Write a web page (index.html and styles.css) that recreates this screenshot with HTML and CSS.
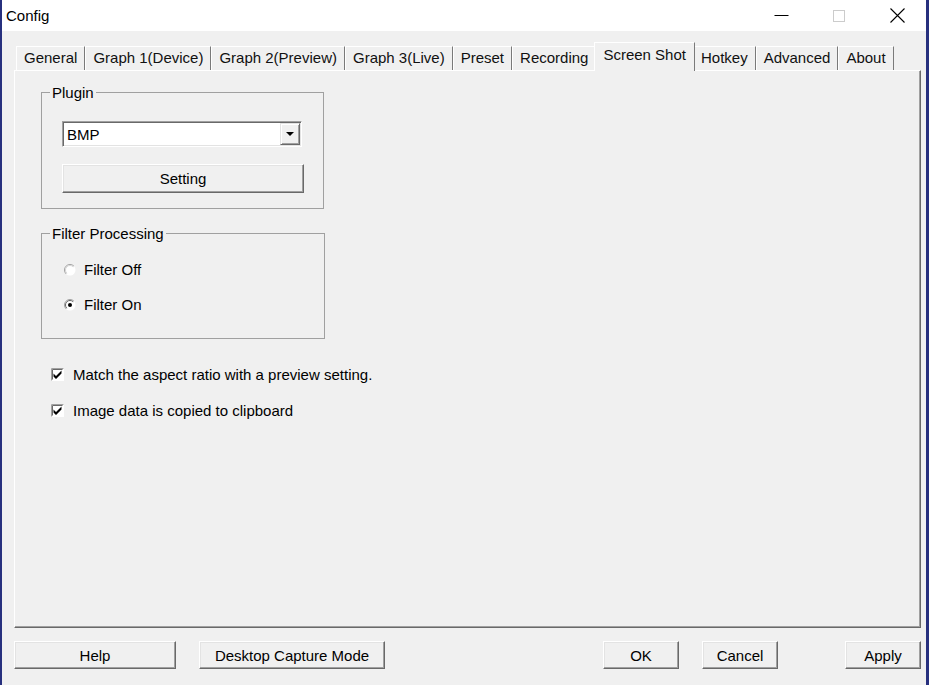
FILE: index.html
```html
<!DOCTYPE html>
<html lang="en">
<head>
<meta charset="utf-8">
<title>Config</title>
<link rel="stylesheet" href="styles.css">
</head>
<body>
<div class="window">
  <header class="titlebar">
    <span class="title">Config</span>
    <div class="caption-buttons">
      <span class="cap-btn"><svg width="15" height="15" viewBox="0 0 15 15"><path d="M0.5 7.5H14.5" stroke="#000" stroke-width="1"/></svg></span>
      <span class="cap-btn"><svg width="12" height="12" viewBox="0 0 12 12"><rect x="0.5" y="0.5" width="11" height="11" fill="none" stroke="#cccccc"/></svg></span>
      <span class="cap-btn"><svg width="15" height="15" viewBox="0 0 15 15"><path d="M0.5 0.5L14.5 14.5M14.5 0.5L0.5 14.5" stroke="#000" stroke-width="1.1"/></svg></span>
    </div>
  </header>
  <main class="dialog">
    <nav class="tabs">
      <span class="tab">General</span>
      <span class="tab">Graph 1(Device)</span>
      <span class="tab">Graph 2(Preview)</span>
      <span class="tab">Graph 3(Live)</span>
      <span class="tab">Preset</span>
      <span class="tab">Recording</span>
      <span class="tab selected">Screen Shot</span>
      <span class="tab">Hotkey</span>
      <span class="tab">Advanced</span>
      <span class="tab">About</span>
    </nav>
    <section class="panel">
      <fieldset class="group plugin">
        <legend>Plugin</legend>
        <div class="group-body plugin-body">
          <div class="combo">
            <span class="combo-text">BMP</span>
            <span class="combo-btn"><svg width="8" height="4" viewBox="0 0 8 4"><path d="M0 0H8L4 4Z" fill="#000"/></svg></span>
          </div>
          <button class="btn setting" type="button">Setting</button>
        </div>
      </fieldset>
      <fieldset class="group filter">
        <legend>Filter Processing</legend>
        <div class="group-body filter-body">
          <label class="option">
            <svg class="radio" width="12" height="12" viewBox="0 0 12 12"><circle cx="6" cy="6" r="5.5" fill="#fff"/><path d="M2.1 9.9A5.5 5.5 0 0 1 9.9 2.1" fill="none" stroke="#a0a0a0"/><path d="M2.8 9.2A4.5 4.5 0 0 1 9.2 2.8" fill="none" stroke="#d4d4d4"/></svg>
            <span>Filter Off</span>
          </label>
          <label class="option">
            <svg class="radio" width="12" height="12" viewBox="0 0 12 12"><circle cx="6" cy="6" r="5.5" fill="#fff"/><path d="M2.1 9.9A5.5 5.5 0 0 1 9.9 2.1" fill="none" stroke="#a0a0a0"/><path d="M2.8 9.2A4.5 4.5 0 0 1 9.2 2.8" fill="none" stroke="#696969"/><circle cx="6" cy="6" r="2" fill="#000"/></svg>
            <span>Filter On</span>
          </label>
        </div>
      </fieldset>
      <div class="checks">
        <label class="check">
          <svg width="13" height="13" viewBox="0 0 13 13"><rect width="13" height="13" fill="#fff"/><path d="M0.5 12.5V0.5H12.5" fill="none" stroke="#a0a0a0"/><path d="M1.5 11.5V1.5H11.5" fill="none" stroke="#696969"/><path d="M2.5 5.5L5 8L10.5 2.5V5.5L5 11L2.5 8.5Z" fill="#000"/></svg>
          <span>Match the aspect ratio with a preview setting.</span>
        </label>
        <label class="check">
          <svg width="13" height="13" viewBox="0 0 13 13"><rect width="13" height="13" fill="#fff"/><path d="M0.5 12.5V0.5H12.5" fill="none" stroke="#a0a0a0"/><path d="M1.5 11.5V1.5H11.5" fill="none" stroke="#696969"/><path d="M2.5 5.5L5 8L10.5 2.5V5.5L5 11L2.5 8.5Z" fill="#000"/></svg>
          <span>Image data is copied to clipboard</span>
        </label>
      </div>
    </section>
    <footer class="footer">
      <button class="btn help" type="button">Help</button>
      <button class="btn capture" type="button">Desktop Capture Mode</button>
      <button class="btn ok" type="button">OK</button>
      <button class="btn cancel" type="button">Cancel</button>
      <button class="btn apply" type="button">Apply</button>
    </footer>
  </main>
</div>
</body>
</html>
```
FILE: styles.css
```css
html, body {
  margin: 0;
  height: 100%;
}
body {
  font: 15px "Liberation Sans", Arial, sans-serif;
  color: #000;
  background: #f0f0f0;
}
.window {
  height: 685px;
  box-sizing: border-box;
  display: flex;
  flex-direction: column;
  border-left: 2px solid #27307e;
  border-right: 3px solid #27307e;
  overflow: hidden;
}
.titlebar {
  flex: none;
  height: 31px;
  background: #fff;
  display: flex;
  align-items: center;
}
.title {
  padding-left: 4px;
}
.caption-buttons {
  margin-left: auto;
  display: flex;
  height: 100%;
}
.cap-btn {
  width: 58px;
  display: flex;
  align-items: center;
  justify-content: center;
}
.dialog {
  flex: 1;
  min-height: 0;
  display: flex;
  flex-direction: column;
  padding: 11px 5px 16px 12px;
}
.tabs {
  flex: none;
  height: 28px;
  display: flex;
  align-items: flex-end;
  padding-left: 2px;
}
.tab {
  box-sizing: border-box;
  height: 24px;
  line-height: 22px;
  padding: 0 7px;
  border-top: 1px solid #fff;
  border-left: 1px solid #fff;
  border-right: 1px solid #7a7a7a;
  white-space: nowrap;
  color: #111;
}
.tab.selected {
  position: relative;
  z-index: 1;
  height: 29px;
  line-height: 24px;
  margin: 0 -2px -1px -2px;
  padding: 0 8px;
  background: #f0f0f0;
}
.panel {
  flex: 1;
  min-height: 0;
  border: 1px solid;
  border-color: #fff #696969 #696969 #fff;
  box-shadow: inset -1px -1px 0 #a0a0a0;
  padding: 13px 0 0 26px;
}
.group {
  margin: 0;
  padding: 0;
  min-width: 0;
  box-sizing: border-box;
  border: 1px solid #a0a0a0;
}
.group legend {
  padding: 0 2px;
  margin-left: 8px;
  line-height: 17px;
}
.plugin {
  width: 283px;
}
.plugin-body {
  padding: 20px 20px 15px 20px;
}
.combo {
  box-sizing: border-box;
  width: 240px;
  height: 26px;
  display: flex;
  align-items: center;
  background: #fff;
  border: 1px solid;
  border-color: #a0a0a0 #fff #fff #a0a0a0;
  box-shadow: inset 1px 1px 0 #696969, inset -1px -1px 0 #e3e3e3;
}
.combo-text {
  padding-left: 4px;
}
.combo-btn {
  box-sizing: border-box;
  margin-left: auto;
  margin-right: 1px;
  width: 20px;
  height: 22px;
  display: flex;
  align-items: center;
  justify-content: center;
  background: #f0f0f0;
  border: 1px solid;
  border-color: #e3e3e3 #696969 #696969 #e3e3e3;
  box-shadow: inset 1px 1px 0 #fff, inset -1px -1px 0 #a0a0a0;
}
.btn {
  box-sizing: border-box;
  font: inherit;
  color: #000;
  background: #f0f0f0;
  border: 1px solid;
  border-color: #fff #696969 #696969 #fff;
  box-shadow: inset -1px -1px 0 #a0a0a0, inset 1px 1px 0 #e3e3e3;
  padding: 0;
  height: 28px;
}
.setting {
  display: block;
  width: 242px;
  height: 29px;
  margin-top: 17px;
}
.filter {
  width: 284px;
  margin-top: 16px;
}
.filter-body {
  padding: 17px 0 24px 22px;
  display: flex;
  flex-direction: column;
  gap: 15px;
}
.option {
  height: 20px;
  display: flex;
  align-items: center;
  gap: 8px;
}
.radio {
  flex: none;
  margin-top: 1px;
}
.checks {
  margin-top: 25px;
  display: flex;
  flex-direction: column;
  gap: 16px;
}
.check {
  height: 20px;
  margin-left: 10px;
  display: flex;
  align-items: center;
  gap: 9px;
}
.check svg {
  flex: none;
}
.footer {
  flex: none;
  display: flex;
  margin-top: 13px;
  height: 28px;
}
.help {
  width: 162px;
}
.capture {
  width: 186px;
  margin-left: 23px;
}
.ok {
  width: 76px;
  margin-left: auto;
}
.cancel {
  width: 76px;
  margin-left: 23px;
}
.apply {
  width: 76px;
  margin-left: 67px;
}
```
